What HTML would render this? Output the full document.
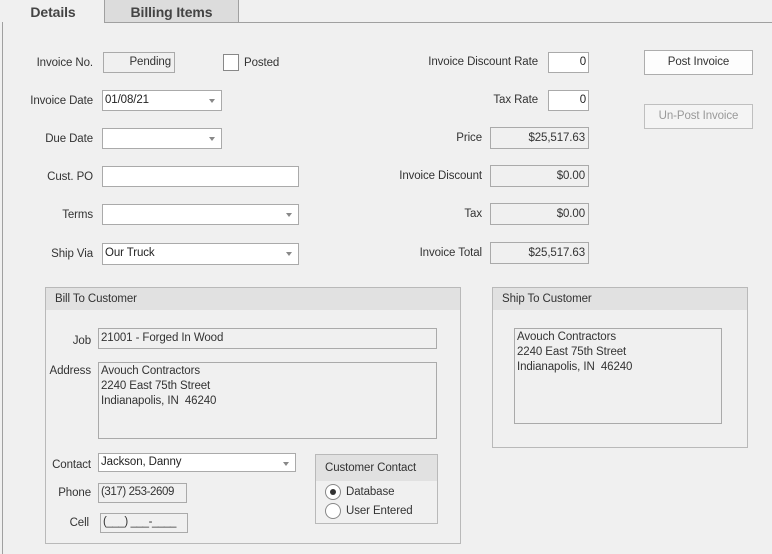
<!DOCTYPE html>
<html><head><style>
body{margin:0;width:772px;height:554px;background:#f0f0f0;font-family:"Liberation Sans",sans-serif;font-size:11.5px;letter-spacing:-0.1px;color:#333;position:relative;overflow:hidden}
div{position:absolute;box-sizing:border-box;white-space:nowrap}
.l{text-align:right;line-height:16px}
.in{background:#fff;border:1px solid #aaa;line-height:18px;padding-left:2px;color:#222}
.ro{background:#f0f0f0;border:1px solid #aaa;line-height:18px;padding-right:3px;text-align:right;color:#333}
.dd::after{content:"";position:absolute;right:6px;top:8px;border:3.5px solid transparent;border-top:4px solid #888}
.btn{background:#fdfdfd;border:1px solid #adadad;text-align:center;line-height:23px}
.gh{background:#e1e1e1;left:0;right:0;top:0;height:22px;line-height:22px;padding-left:9px;border-bottom:1px solid #e1e1e1}
.gr{border:1px solid #b9b9b9}
</style></head><body>
<div style="left:2px;top:22px;width:1px;height:532px;background:#a0a0a0"></div>
<div style="left:104px;top:22px;width:668px;height:1px;background:#a0a0a0"></div>
<div style="left:104px;top:0;width:1px;height:22px;background:#a0a0a0"></div>
<div style="left:5px;top:2px;width:96px;font-size:14px;font-weight:bold;color:#444;text-align:center;line-height:20px">Details</div>
<div style="left:105px;top:0;width:134px;height:22px;background:#dcdcdc;border-right:1px solid #a0a0a0;font-size:14px;font-weight:bold;color:#444;text-align:center;line-height:24px">Billing Items</div>

<div class="l" style="left:0;width:93px;top:55px">Invoice No.</div>
<div class="ro" style="left:103px;top:52px;width:72px;height:21px">Pending</div>
<div style="left:223px;top:54px;width:16px;height:17px;background:#fff;border:1px solid #888"></div>
<div style="left:244px;top:55px;line-height:16px">Posted</div>
<div class="l" style="left:0;width:93px;top:93px">Invoice Date</div>
<div class="in dd" style="left:102px;top:90px;width:120px;height:21px">01/08/21</div>
<div class="l" style="left:0;width:93px;top:131px">Due Date</div>
<div class="in dd" style="left:102px;top:128px;width:120px;height:21px"></div>
<div class="l" style="left:0;width:93px;top:169px">Cust. PO</div>
<div class="in" style="left:102px;top:166px;width:197px;height:21px"></div>
<div class="l" style="left:0;width:93px;top:207px">Terms</div>
<div class="in dd" style="left:102px;top:204px;width:197px;height:21px"></div>
<div class="l" style="left:0;width:93px;top:246px">Ship Via</div>
<div class="in dd" style="left:102px;top:243px;width:197px;height:22px">Our Truck</div>

<div class="l" style="left:380px;width:158px;top:54px">Invoice Discount Rate</div>
<div class="in" style="left:548px;top:52px;width:41px;height:21px;text-align:right;padding-right:2px">0</div>
<div class="l" style="left:380px;width:158px;top:92px">Tax Rate</div>
<div class="in" style="left:548px;top:90px;width:41px;height:21px;text-align:right;padding-right:2px">0</div>
<div class="l" style="left:380px;width:102px;top:130px">Price</div>
<div class="ro" style="left:490px;top:127px;width:99px;height:22px;line-height:20px">$25,517.63</div>
<div class="l" style="left:380px;width:102px;top:168px">Invoice Discount</div>
<div class="ro" style="left:490px;top:165px;width:99px;height:22px;line-height:20px">$0.00</div>
<div class="l" style="left:380px;width:102px;top:206px">Tax</div>
<div class="ro" style="left:490px;top:203px;width:99px;height:22px;line-height:20px">$0.00</div>
<div class="l" style="left:380px;width:102px;top:245px">Invoice Total</div>
<div class="ro" style="left:490px;top:242px;width:99px;height:22px;line-height:20px">$25,517.63</div>

<div class="btn" style="left:644px;top:50px;width:109px;height:25px">Post Invoice</div>
<div class="btn" style="left:644px;top:104px;width:109px;height:25px;color:#999;background:#f4f4f4;border-color:#bfbfbf">Un-Post Invoice</div>

<div class="gr" style="left:45px;top:287px;width:416px;height:257px">
<div class="gh">Bill To Customer</div>
</div>
<div class="l" style="left:40px;width:51px;top:333px">Job</div>
<div class="ro" style="left:98px;top:328px;width:339px;height:21px;text-align:left;padding-left:2px">21001 - Forged In Wood</div>
<div class="l" style="left:40px;width:51px;top:363px">Address</div>
<div class="ro" style="left:98px;top:362px;width:339px;height:77px;text-align:left;padding:1px 2px;line-height:15px">Avouch Contractors<br>2240 East 75th Street<br>Indianapolis, IN&nbsp; 46240</div>
<div class="l" style="left:40px;width:51px;top:457px">Contact</div>
<div class="in dd" style="left:98px;top:453px;width:198px;height:19px;line-height:16px">Jackson, Danny</div>
<div class="l" style="left:40px;width:51px;top:485px">Phone</div>
<div class="ro" style="left:98px;top:483px;width:89px;height:20px;text-align:left;padding-left:2px;line-height:17px;letter-spacing:-0.4px">(317) 253-2609</div>
<div class="l" style="left:40px;width:49px;top:515px">Cell</div>
<div class="ro" style="left:100px;top:513px;width:88px;height:20px;text-align:left;padding-left:2px;line-height:17px;letter-spacing:-0.4px">(___) ___-____</div>

<div class="gr" style="left:315px;top:454px;width:123px;height:70px">
<div class="gh" style="height:26px;line-height:26px;padding-left:9px">Customer Contact</div>
</div>
<div style="left:325px;top:484px;width:16px;height:16px;border-radius:50%;border:1px solid #888;background:#fff"><div style="left:4px;top:4px;width:6px;height:6px;border-radius:50%;background:#333"></div></div>
<div style="left:346px;top:484px;line-height:16px">Database</div>
<div style="left:325px;top:503px;width:16px;height:16px;border-radius:50%;border:1px solid #888;background:#fff"></div>
<div style="left:346px;top:503px;line-height:16px">User Entered</div>

<div class="gr" style="left:492px;top:287px;width:256px;height:161px">
<div class="gh">Ship To Customer</div>
</div>
<div class="ro" style="left:514px;top:328px;width:208px;height:96px;text-align:left;padding:1px 2px;line-height:15px">Avouch Contractors<br>2240 East 75th Street<br>Indianapolis, IN&nbsp; 46240</div>
</body></html>
